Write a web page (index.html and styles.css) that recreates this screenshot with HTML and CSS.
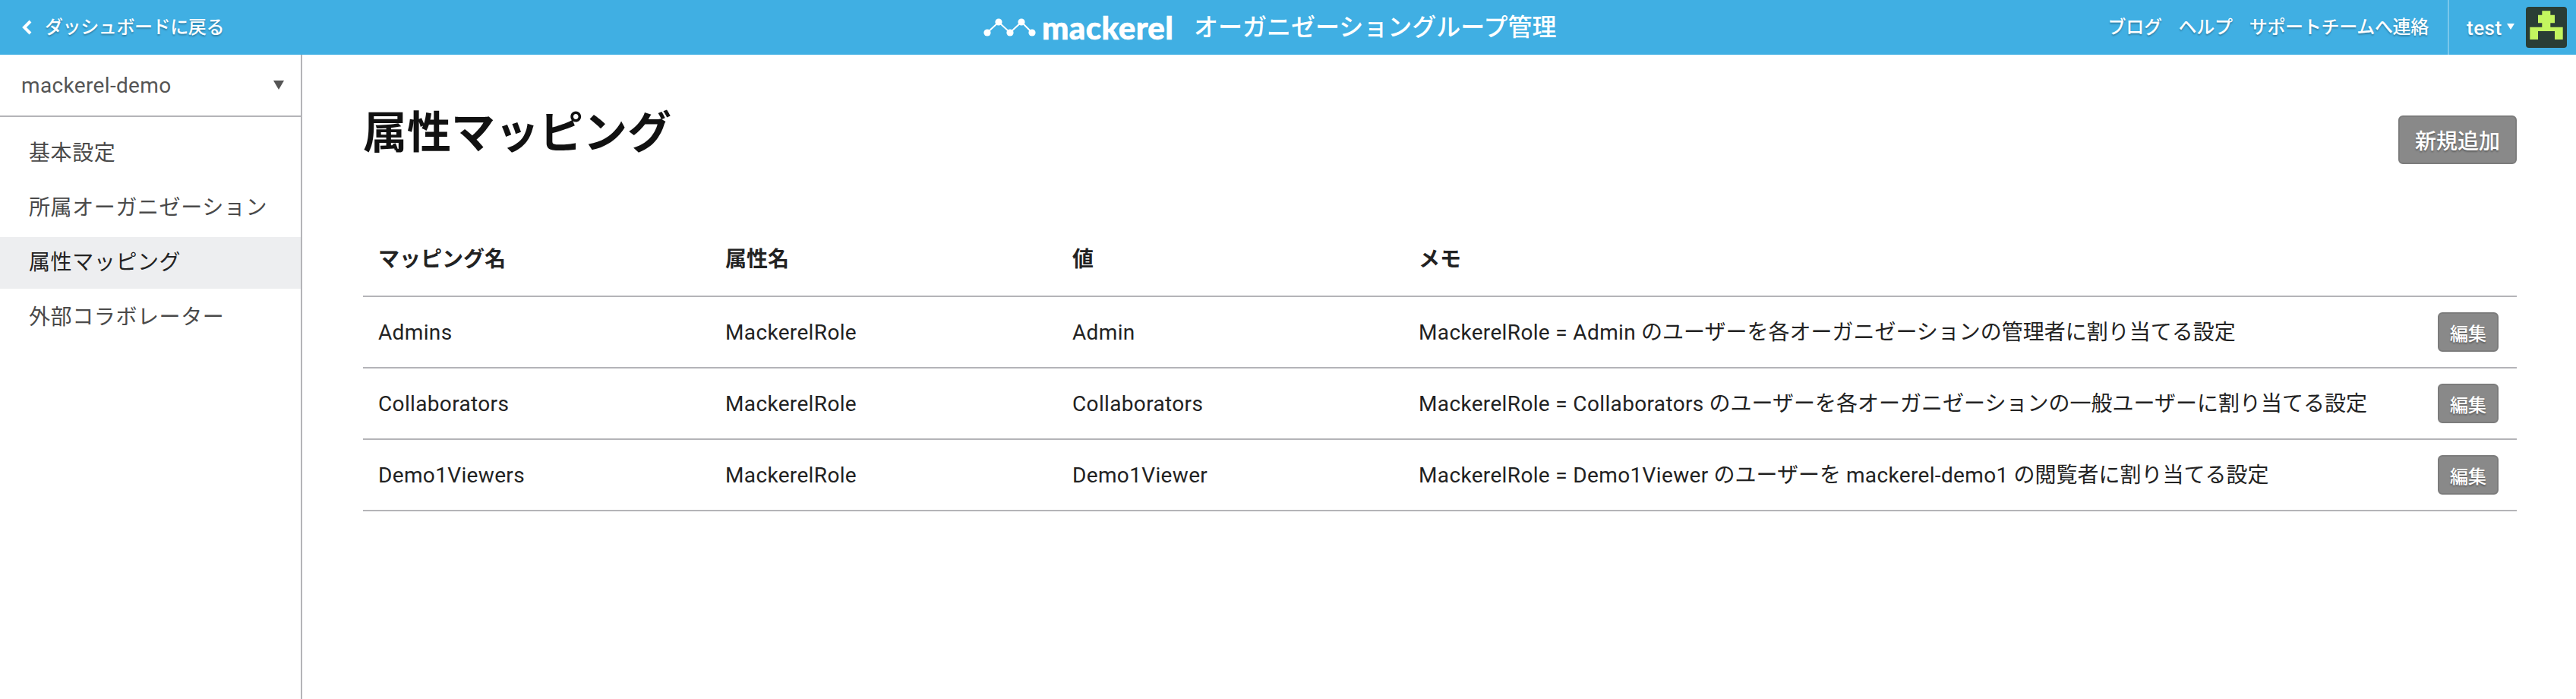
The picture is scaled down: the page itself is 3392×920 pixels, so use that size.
FILE: index.html
```html
<!DOCTYPE html>
<html lang="ja">
<head>
<meta charset="utf-8">
<title>属性マッピング</title>
<link rel="stylesheet" href="styles.css">
</head>
<body>
<header class="topbar">
  <a class="back" href="#">
    <svg class="back-icon" viewBox="0 0 15 20" aria-hidden="true"><path d="M13 2 5 10l8 8" fill="none" stroke="#fff" stroke-width="4"/></svg>
    <span>ダッシュボードに戻る</span>
  </a>
  <div class="brand">
    <svg class="logo-mark" viewBox="0 0 70 28" aria-hidden="true">
      <path d="M5 21 20 7l15 14L50 7l14 14" fill="none" stroke="#fff" stroke-width="2"/>
      <circle cx="5" cy="21" r="4.6" fill="#fff"/><circle cx="20" cy="7" r="4.6" fill="#fff"/><circle cx="35" cy="21" r="4.6" fill="#fff"/><circle cx="50" cy="7" r="4.6" fill="#fff"/><circle cx="64" cy="21" r="4.6" fill="#fff"/>
    </svg>
    <span class="logo-word">mackerel</span>
    <span class="brand-title">オーガニゼーショングループ管理</span>
  </div>
  <nav class="toplinks">
    <a href="#">ブログ</a>
    <a href="#">ヘルプ</a>
    <a href="#">サポートチームへ連絡</a>
  </nav>
  <div class="user">
    <span class="user-name">test</span>
    <span class="user-caret"></span>
    <svg class="avatar" viewBox="0 0 54 54" aria-hidden="true">
      <rect width="54" height="54" rx="4" fill="#2a3d35"/>
      <path d="M21.3 5.3h11v5.4H38v10.6h-5.7v5.4h16.4V43H38V32H16v11H5.3V26.7h16v-5.4H16V10.7h5.3z" fill="#c3f55f"/>
    </svg>
  </div>
</header>
<div class="layout">
  <aside class="sidebar">
    <div class="org-select">
      <span class="org-name">mackerel-demo</span>
      <span class="org-caret"></span>
    </div>
    <ul class="side-nav">
      <li><a href="#">基本設定</a></li>
      <li><a href="#">所属オーガニゼーション</a></li>
      <li class="active"><a href="#">属性マッピング</a></li>
      <li><a href="#">外部コラボレーター</a></li>
    </ul>
  </aside>
  <main class="content">
    <div class="page-head">
      <h1>属性マッピング</h1>
      <button class="btn btn-add">新規追加</button>
    </div>
    <table class="mapping">
      <colgroup><col class="c1"><col class="c2"><col class="c3"><col class="c4"><col class="c5"></colgroup>
      <thead>
        <tr><th>マッピング名</th><th>属性名</th><th>値</th><th>メモ</th><th></th></tr>
      </thead>
      <tbody>
        <tr><td>Admins</td><td>MackerelRole</td><td>Admin</td><td class="memo"><span class="en">MackerelRole = Admin</span> のユーザーを各オーガニゼーションの管理者に割り当てる設定</td><td class="act"><button class="btn btn-edit">編集</button></td></tr>
        <tr><td>Collaborators</td><td>MackerelRole</td><td>Collaborators</td><td class="memo"><span class="en">MackerelRole = Collaborators</span> のユーザーを各オーガニゼーションの一般ユーザーに割り当てる設定</td><td class="act"><button class="btn btn-edit">編集</button></td></tr>
        <tr><td>Demo1Viewers</td><td>MackerelRole</td><td>Demo1Viewer</td><td class="memo"><span class="en">MackerelRole = Demo1Viewer</span> のユーザーを <span class="en">mackerel-demo1</span> の閲覧者に割り当てる設定</td><td class="act"><button class="btn btn-edit">編集</button></td></tr>
      </tbody>
    </table>
  </main>
</div>
</body>
</html>
```
FILE: styles.css
```css
* { box-sizing: border-box; }
html, body { margin: 0; height: 100%; }
body {
  font-family: Roboto, "Noto Sans CJK JP", sans-serif;
  color: #222;
  background: #fff;
  font-size: 28px;
  line-height: 40px;
  letter-spacing: .35px;
}
a { color: inherit; text-decoration: none; }

.topbar {
  height: 72px;
  background: #40afe3;
  color: #fff;
  display: flex;
  align-items: center;
  text-shadow: 0 2px 2px rgba(0, 0, 0, .25);
}
.back {
  display: flex;
  align-items: center;
  gap: 17px;
  width: 1295px;
  padding-left: 27px;
  font-size: 24px;
  font-weight: 500;
  letter-spacing: -.4px;
}
.back-icon { width: 15px; height: 20px; }
.brand { display: flex; align-items: center; }
.logo-mark { width: 70px; height: 28px; margin-right: 7px; }
.logo-word {
  font-family: Lato, sans-serif;
  font-weight: 900;
  font-size: 42px;
  line-height: 1;
  letter-spacing: .4px;
  width: 174px;
  margin-right: 26px;
  text-shadow: none;
  -webkit-text-stroke: .6px #fff;
}
.brand-title { font-size: 32px; font-weight: 500; letter-spacing: 0; text-shadow: none; }
.toplinks {
  margin-left: auto;
  display: flex;
  gap: 22px;
  font-size: 24px;
  padding-right: 25px;
  font-weight: 500;
  letter-spacing: -.3px;
}
.user {
  height: 72px;
  border-left: 2px solid rgba(255, 255, 255, .3);
  display: flex;
  align-items: center;
  width: 169px;
  padding-left: 23px;
}
.user-name { font-size: 26px; font-weight: 500; letter-spacing: .5px; margin-top: 2px; }
.user-caret {
  border-left: 5px solid transparent;
  border-right: 5px solid transparent;
  border-top: 8px solid #fff;
  margin-left: 6px;
  margin-bottom: 2px;
}
.avatar { width: 54px; height: 54px; margin-left: auto; margin-right: 12px; }

.layout { display: flex; height: calc(100% - 72px); }
.sidebar {
  width: 398px;
  flex: none;
  border-right: 2px solid #b4b4b8;
}
.org-select {
  height: 82px;
  border-bottom: 2px solid #b4b4b8;
  padding: 0 22px 0 28px;
  display: flex;
  align-items: center;
  justify-content: space-between;
  color: #555;
}
.org-name { margin-top: 2px; }
.org-caret {
  border-left: 7px solid transparent;
  border-right: 7px solid transparent;
  border-top: 12px solid #555;
}
.side-nav { list-style: none; margin: 14px 0 0; padding: 0; letter-spacing: .6px; }
.side-nav li { margin-bottom: 4px; }
.side-nav a {
  display: flex;
  align-items: center;
  height: 68px;
  padding-left: 38px;
  color: #4a4a4a;
}
.side-nav .active a { background: #edeef0; color: #222; }

.content { flex: 1; padding: 0 78px 0 80px; }
.page-head {
  height: 222px;
  display: flex;
  align-items: flex-start;
  justify-content: space-between;
}
h1 {
  margin: 68px 0 0;
  font-size: 58px;
  line-height: 70px;
  font-weight: 700;
  letter-spacing: 0;
  color: #111;
}
.btn {
  font-family: inherit;
  color: #fff;
  background: #898989;
  border: 2px solid #7c7c7c;
  border-radius: 6px;
  font-weight: 500;
  padding: 0;
  letter-spacing: 0;
  text-shadow: 0 2px 2px rgba(0, 0, 0, .3);
}
.btn-add { width: 156px; height: 64px; margin-top: 80px; font-size: 28px; }
.btn-edit { width: 80px; height: 52px; font-size: 24px; display: block; margin-left: auto; }

.mapping { width: 100%; table-layout: fixed; border-collapse: collapse; }
.c1, .c2 { width: 457px; }
.c3 { width: 456px; }
.c4 { width: auto; }
.c5 { width: 130px; }
.mapping th {
  text-align: left;
  font-weight: 700;
  letter-spacing: 0;
  padding: 0 20px;
  height: 96px;
  border-bottom: 2px solid #b4b4b8;
}
.mapping td {
  height: 94px;
  padding: 2px 20px 0;
  border-bottom: 2px solid #b4b4b8;
  white-space: nowrap;
}
.mapping td.memo { letter-spacing: 0; }
.mapping .en { letter-spacing: .35px; }
.mapping td.act { padding: 0 24px 0 0; }
```
